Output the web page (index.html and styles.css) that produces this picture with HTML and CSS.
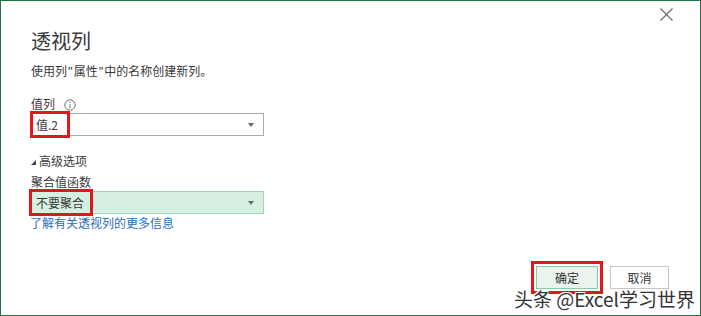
FILE: index.html
```html
<!DOCTYPE html>
<html lang="zh-CN">
<head>
    <meta charset="UTF-8">
    <title>透视列</title>
    <link rel="stylesheet" href="styles.css">
</head>
<body>
    <div class="dialog">
        <div class="topbar">
            <svg class="close" width="13" height="13" viewBox="0 0 13 13">
                <path d="M0.5 0.5 L12.5 12.5 M12.5 0.5 L0.5 12.5" stroke="#666" stroke-width="1.1" fill="none"/>
            </svg>
        </div>

        <h1 class="title">透视列</h1>
        <p class="desc">使用列<span class="q">"</span>属性<span class="q">"</span>中的名称创建新列。</p>

        <div class="label">值列
            <svg class="info" width="12" height="12" viewBox="0 0 12 12">
                <circle cx="6" cy="6" r="5.2" stroke="#777" stroke-width="1" fill="none"/>
                <path d="M6 5 V9" stroke="#777" stroke-width="1"/>
                <circle cx="6" cy="3.3" r="0.7" fill="#777"/>
            </svg>
        </div>
        <div class="select">
            <span class="value">值.2</span>
            <span class="mark mark-value"></span>
            <span class="caret"></span>
        </div>

        <div class="advanced"><span class="tri"></span>高级选项</div>
        <div class="label">聚合值函数</div>
        <div class="select select-green">
            <span class="value">不要聚合</span>
            <span class="mark mark-agg"></span>
            <span class="caret"></span>
        </div>
        <a class="link" href="#">了解有关透视列的更多信息</a>

        <div class="actions">
            <button class="btn btn-ok">确定</button>
            <button class="btn">取消</button>
        </div>

        <div class="watermark">头条 @Excel学习世界</div>
    </div>
</body>
</html>
```

FILE: styles.css
```css
body {
    margin: 0;
    font-family: "Noto Sans CJK SC", "Noto Sans", sans-serif;
    color: #3a3a3a;
    background: #fff;
}

.dialog {
    position: relative;
    width: 701px;
    height: 316px;
    box-sizing: border-box;
    border: 1px solid #217346;
    padding: 0 29px;
}

.topbar {
    display: flex;
    justify-content: flex-end;
    height: 27px;
    padding-top: 7px;
    box-sizing: border-box;
    margin-right: -2px;
}

.title {
    margin: 0;
    font-size: 20px;
    font-weight: normal;
    line-height: 26px;
    color: #3a3a3a;
    padding-left: 1px;
}

.desc {
    margin: 8px 0 0;
    font-size: 12px;
    line-height: 18px;
    padding-left: 1px;
}

.q {
    font-family: "Liberation Sans", sans-serif;
    font-size: 13px;
    padding: 0 1px;
}

.label {
    display: flex;
    align-items: center;
    gap: 9px;
    font-size: 12px;
    line-height: 18px;
    padding-left: 1px;
}

.desc + .label {
    margin-top: 14px;
}

.info {
    margin-top: 1px;
}

.select {
    position: relative;
    display: flex;
    align-items: center;
    width: 234px;
    height: 23px;
    box-sizing: border-box;
    border: 1px solid #ababab;
    padding-left: 5px;
    font-size: 12px;
}

.select-green {
    background: #d5efe0;
    border-color: #9fd6b6;
}

.caret {
    position: absolute;
    right: 9px;
    top: 9px;
    width: 0;
    height: 0;
    border-left: 3.5px solid transparent;
    border-right: 3.5px solid transparent;
    border-top: 4px solid #666;
}

.mark {
    position: absolute;
    border: 3px solid #e5151d;
    box-sizing: border-box;
}

.mark-value {
    left: -1px;
    top: -3px;
    width: 40px;
    height: 27px;
}

.mark-agg {
    left: -2px;
    top: -3px;
    width: 64px;
    height: 27px;
}

.advanced {
    display: flex;
    align-items: center;
    margin-top: 16px;
    font-size: 12px;
    line-height: 18px;
    padding-left: 1px;
}

.tri {
    width: 0;
    height: 0;
    border-left: 5px solid transparent;
    border-bottom: 5px solid #444;
    margin: 3px 3px 0 0;
}

.advanced + .label {
    margin-top: 3px;
}

.link {
    display: block;
    font-size: 12px;
    line-height: 18px;
    color: #2a6ebb;
    text-decoration: none;
    margin-top: 0;
}

.actions {
    display: flex;
    justify-content: flex-end;
    gap: 12px;
    margin-top: 34px;
    margin-right: 2px;
}

.btn {
    height: 23px;
    box-sizing: border-box;
    border: 1px solid #c6c6c6;
    background: #fff;
    font-family: inherit;
    font-size: 12px;
    line-height: 14px;
    color: #333;
    padding: 0;
    width: 59px;
}

.btn-ok {
    width: 62px;
    background: #e8f4ec;
    border-color: #8ccaa3;
    outline: 3px solid #e5151d;
    outline-offset: 2px;
}

.watermark {
    position: absolute;
    right: 5px;
    bottom: 6px;
    font-size: 19px;
    line-height: 20px;
    color: #333;
    text-shadow: 1px 1px 0 #fff, -1px -1px 0 #fff, 1px -1px 0 #fff, -1px 1px 0 #fff;
}
```
